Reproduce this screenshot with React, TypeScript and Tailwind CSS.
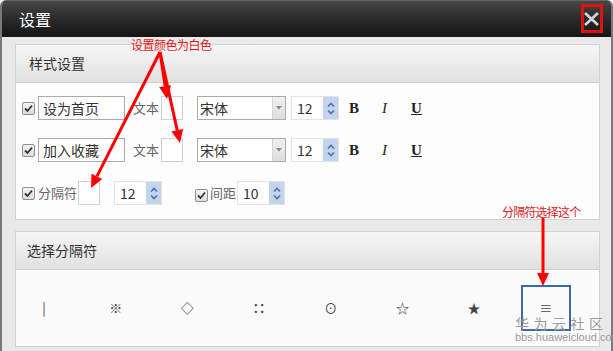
import React from "react";

const FONT = { fontFamily: '"Noto Sans CJK SC", "Noto Sans", sans-serif' };

function Check() {
  return (
    <span className="inline-flex h-[13px] w-[13px] shrink-0 items-center justify-center rounded-[2px] border border-[#8e8e8e] bg-gradient-to-b from-[#f4f4f4] to-[#dcdcdc]">
      <svg width="9" height="9" viewBox="0 0 9 9">
        <path d="M1 4.5 L3.5 7 L8 1.5" fill="none" stroke="#333" strokeWidth="1.8" />
      </svg>
    </span>
  );
}

function Spin({ value, className = "" }: { value: string; className?: string }) {
  return (
    <div className={`flex h-[24px] w-[48px] border border-[#e3e3e3] bg-white ${className}`}>
      <span className="flex-1 pl-[5px] text-[14px] leading-[22px] text-[#333]">{value}</span>
      <span className="flex w-[15px] flex-col items-center justify-center gap-[3px] bg-[#c3d4ef]">
        <svg width="8" height="5" viewBox="0 0 8 5">
          <path d="M1 4.5 L4 1.5 L7 4.5" fill="none" stroke="#4d72ad" strokeWidth="1.6" />
        </svg>
        <svg width="8" height="5" viewBox="0 0 8 5">
          <path d="M1 0.5 L4 3.5 L7 0.5" fill="none" stroke="#4d72ad" strokeWidth="1.6" />
        </svg>
      </span>
    </div>
  );
}

function StyleRow({ label }: { label: string }) {
  return (
    <div className="flex h-[24px] items-center">
      <Check />
      <div className="ml-[3px] h-[24px] w-[87px] border border-[#ababab] bg-white pl-[4px] text-[14px] leading-[22px] text-[#333]">
        {label}
      </div>
      <span className="ml-[8px] text-[13px] text-[#666]">文本</span>
      <div className="ml-[2px] h-[24px] w-[22px] border border-[#d0d0d0] bg-white" />
      <div className="ml-[14px] flex h-[24px] w-[89px] border border-[#ababab] bg-white">
        <span className="flex-1 pl-[2px] text-[14px] leading-[22px] text-[#333]">宋体</span>
        <span className="flex w-[13px] items-center justify-center border-l border-[#d6d6d6] bg-gradient-to-b from-[#f0f0f0] to-[#dedede]">
          <svg width="6" height="4" viewBox="0 0 6 4">
            <path d="M0 0 H6 L3 3.5 Z" fill="#888" />
          </svg>
        </span>
      </div>
      <Spin value="12" className="ml-[5px]" />
      <span className="ml-[10px] text-[15px] font-bold text-[#222]" style={{ fontFamily: '"Liberation Serif", serif' }}>
        B
      </span>
      <span className="ml-[23px] text-[15px] italic text-[#222]" style={{ fontFamily: '"Liberation Serif", serif' }}>
        I
      </span>
      <span className="ml-[24px] text-[15px] font-bold underline text-[#222]" style={{ fontFamily: '"Liberation Serif", serif' }}>
        U
      </span>
    </div>
  );
}

const SYMBOLS = ["|", "※", "◇", "∷", "⊙", "☆", "★", "≡"];

function Arrow({ x1, y1, x2, y2 }: { x1: number; y1: number; x2: number; y2: number }) {
  const a = Math.atan2(y2 - y1, x2 - x1);
  const len = 13;
  const w = 6;
  const bx = x2 - len * Math.cos(a);
  const by = y2 - len * Math.sin(a);
  const px = -Math.sin(a) * w;
  const py = Math.cos(a) * w;
  return (
    <g>
      <line x1={x1} y1={y1} x2={bx} y2={by} stroke="#f00" strokeWidth="3" />
      <polygon points={`${x2},${y2} ${bx + px},${by + py} ${bx - px},${by - py}`} fill="#f00" />
    </g>
  );
}

export default function App() {
  return (
    <div className="relative h-[351px] w-[613px] overflow-hidden bg-white" style={FONT}>
      <div className="flex h-full flex-col overflow-hidden rounded-t-[6px] border-x-2 border-[#7a7a7a] bg-[#e9e9e9]">
        {/* title bar */}
        <div className="flex h-[37px] shrink-0 items-center justify-between border-t border-[#666] bg-gradient-to-b from-[#474747] via-[#2a2a2a] to-[#161616] pl-[17px] pr-[11px]">
          <span className="text-[16px] text-white">设置</span>
          <svg width="17" height="14" viewBox="0 0 17 14">
            <path d="M2 1 L15 13 M15 1 L2 13" stroke="#d6d6d6" strokeWidth="2.6" />
          </svg>
        </div>

        <div className="flex flex-col gap-[11px] pl-[13px] pr-[11px] pt-[7px]">
          {/* style panel */}
          <div className="flex h-[176px] flex-col border border-[#d2d2d2] bg-[#fdfdfd]">
            <div className="flex h-[38px] shrink-0 items-center border-b border-[#cfcfcf] bg-gradient-to-b from-[#f6f6f6] to-[#e1e1e1] pl-[13px] text-[14px] text-[#333]">
              样式设置
            </div>
            <div className="flex flex-col pl-[6px] pt-[13px]">
              <StyleRow label="设为首页" />
              <div className="h-[18px]" />
              <StyleRow label="加入收藏" />
              <div className="h-[19px]" />
              <div className="flex h-[24px] items-center">
                <Check />
                <span className="ml-[3px] text-[13px] text-[#666]">分隔符</span>
                <div className="ml-[1px] h-[24px] w-[22px] border border-[#d0d0d0] bg-white" />
                <Spin value="12" className="ml-[14px]" />
                <span className="ml-[33px]">
                  <Check />
                </span>
                <span className="ml-[2px] text-[13px] text-[#666]">间距</span>
                <Spin value="10" className="ml-[1px]" />
              </div>
            </div>
          </div>

          {/* separator panel */}
          <div className="flex h-[116px] flex-col border border-[#d2d2d2] bg-[#fbfbfb]">
            <div className="flex h-[38px] shrink-0 items-center border-b border-[#cfcfcf] bg-gradient-to-b from-[#f6f6f6] to-[#e1e1e1] pl-[11px] text-[14px] text-[#333]">
              选择分隔符
            </div>
            <div className="flex flex-1 items-center gap-[21.7px] pl-[3px]">
              {SYMBOLS.map((s, i) => (
                <div
                  key={s}
                  className={`flex h-[46px] w-[50px] items-center justify-center text-[13px] text-[#444] ${
                    i === SYMBOLS.length - 1 ? "border-2 border-[#3d68ad]" : ""
                  } ${s === "∷" ? "text-[11px] font-bold" : ""}`}
                >
                  {s}
                </div>
              ))}
            </div>
          </div>
        </div>
      </div>

      {/* annotations */}
      <div className="absolute left-[581px] top-[4px] h-[29px] w-[22px] border-[3px] border-[#e41010]" />
      <span className="absolute left-[131px] top-[36px] text-[12px] tracking-[-0.5px] text-[#e41a1a]">设置颜色为白色</span>
      <span className="absolute left-[502px] top-[203px] text-[12px] tracking-[-0.8px] text-[#e41a1a]">分隔符选择这个</span>
      <div className="absolute left-[515px] top-[316px] leading-none text-[#9a9a9a]">
        <div className="flex w-[88px] justify-between text-[14px]">
          <span>华</span>
          <span>为</span>
          <span>云</span>
          <span>社</span>
          <span>区</span>
        </div>
        <div className="mt-[2px] text-[11px]" style={{ fontFamily: '"Liberation Sans", sans-serif' }}>
          bbs.huaweicloud.com
        </div>
      </div>
      <svg className="pointer-events-none absolute left-0 top-0" width="613" height="351">
        <Arrow x1={160} y1={52} x2={167} y2={99} />
        <Arrow x1={160} y1={52} x2={180} y2={143} />
        <Arrow x1={160} y1={52} x2={91} y2={188} />
        <Arrow x1={543} y1={218} x2={543} y2={286} />
      </svg>
    </div>
  );
}
